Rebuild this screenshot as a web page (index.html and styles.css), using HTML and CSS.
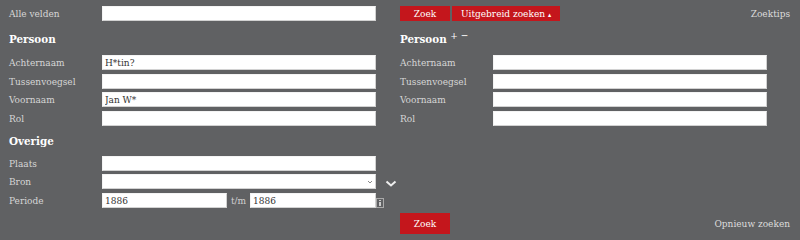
FILE: index.html
```html
<!DOCTYPE html>
<html lang="nl">

<head>
    <meta charset="UTF-8">
    <title>Zoeken</title>
    <link rel="stylesheet" href="styles.css">
</head>

<body>
    <form class="search">

        <!-- bovenste regel -->
        <div class="col">
            <div class="row">
                <label>Alle velden</label>
                <input type="text">
            </div>
        </div>
        <div class="col wide">
            <div class="bar">
                <div class="buttons">
                    <button type="button" class="btn">Zoek</button>
                    <button type="button" class="btn more">Uitgebreid zoeken <span class="caret">&#9652;</span></button>
                </div>
                <a class="link tips">Zoektips</a>
            </div>
        </div>

        <!-- persoon links -->
        <div class="col">
            <h2>Persoon</h2>
            <div class="rows">
                <div class="row"><label>Achternaam</label><input type="text" value="H*tin?"></div>
                <div class="row"><label>Tussenvoegsel</label><input type="text"></div>
                <div class="row"><label>Voornaam</label><input type="text" value="Jan W*"></div>
                <div class="row"><label>Rol</label><input type="text"></div>
            </div>

            <h2 class="second">Overige</h2>
            <div class="rows">
                <div class="row"><label>Plaats</label><input type="text"></div>
                <div class="row">
                    <label>Bron</label>
                    <span class="select">
                        <select></select>
                        <svg class="arrow" width="6" height="4" viewBox="0 0 6 4"><polyline points="1,1 3,3 5,1" fill="none" stroke="#888" stroke-width="1"/></svg>
                    </span>
                    <svg class="toggle" width="12" height="8" viewBox="0 0 12 8"><polyline points="1.5,1.5 6,5.5 10.5,1.5" fill="none" stroke="#eee" stroke-width="2"/></svg>
                </div>
                <div class="row">
                    <label>Periode</label>
                    <input type="text" class="year" value="1886">
                    <span class="tm">t/m</span>
                    <input type="text" class="year last" value="1886">
                    <svg class="info" width="8" height="10" viewBox="0 0 8 10"><rect x="0.5" y="0.5" width="7" height="9" fill="none" stroke="#aaa"/><rect x="3" y="4" width="2" height="4" fill="#ccc"/><rect x="3" y="2" width="2" height="1" fill="#ccc"/></svg>
                </div>
            </div>
        </div>

        <!-- persoon rechts -->
        <div class="col wide">
            <h2>Persoon <span class="plusmin">+ &minus;</span></h2>
            <div class="rows">
                <div class="row"><label>Achternaam</label><input type="text"></div>
                <div class="row"><label>Tussenvoegsel</label><input type="text"></div>
                <div class="row"><label>Voornaam</label><input type="text"></div>
                <div class="row"><label>Rol</label><input type="text"></div>
            </div>
        </div>

        <!-- onderste regel -->
        <div class="col"></div>
        <div class="col wide">
            <div class="bar bottom">
                <button type="button" class="btn big">Zoek</button>
                <a class="link">Opnieuw zoeken</a>
            </div>
        </div>
    </form>
</body>

</html>
```

FILE: styles.css
```css
body {
    margin: 0;
    background-color: #606163;
    font-family: "DejaVu Serif Condensed", "DejaVu Serif", serif;
    font-size: 10px;
    color: #d6d6d6;
}

.search {
    display: grid;
    grid-template-columns: 367px 392px;
    column-gap: 24px;
    padding: 6px 0 0 9px;
    margin: 0;
}

.col {
    min-width: 0;
}

.row {
    display: flex;
    align-items: center;
    height: 15px;
}

.rows {
    display: flex;
    flex-direction: column;
    gap: 3.5px;
}

label {
    flex: none;
    width: 93px;
}

input,
select {
    box-sizing: border-box;
    flex: none;
    width: 274px;
    height: 15px;
    margin: 0;
    padding: 0 2px;
    border: 1px solid #d2d2d2;
    border-top-color: #f4f4f4;
    border-left-color: #f4f4f4;
    background-color: #fff;
    font-family: inherit;
    font-size: 10px;
    color: #333;
    outline: none;
}

select {
    appearance: none;
    -webkit-appearance: none;
    border-radius: 0;
    display: block;
}

.select {
    position: relative;
    flex: none;
}

.arrow {
    position: absolute;
    right: 3px;
    top: 6px;
}

.toggle {
    flex: none;
    margin-left: 9px;
    margin-top: 5px;
}

.year {
    width: 125px;
}

.year.last {
    width: 126px;
}

.tm {
    flex: none;
    width: 23px;
    text-align: center;
    color: #d0d0d0;
}

.info {
    flex: none;
    margin-top: 6px;
}

h2 {
    margin: 9px 0 7px;
    height: 18px;
    line-height: 18px;
    font-size: 11.5px;
    font-weight: bold;
    color: #fff;
}

h2.second {
    margin: 6.5px 0 5.5px;
}

.plusmin {
    position: relative;
    top: -4px;
    font-size: 10px;
    font-weight: normal;
}

.bar {
    display: flex;
    justify-content: space-between;
    align-items: center;
    height: 15px;
}

.buttons {
    display: flex;
    gap: 2px;
}

.btn {
    height: 15px;
    padding: 0;
    border: none;
    background-color: #c4161c;
    color: #fff;
    font-family: inherit;
    font-size: 10px;
    width: 50px;
}

.btn.more {
    width: 108px;
}

.caret {
    font-size: 7px;
}

.btn.big {
    height: 21px;
}

.bottom {
    height: 21px;
    margin-top: 5.5px;
}

.link {
    color: #dcdcdc;
    margin-right: 2px;
}
```
